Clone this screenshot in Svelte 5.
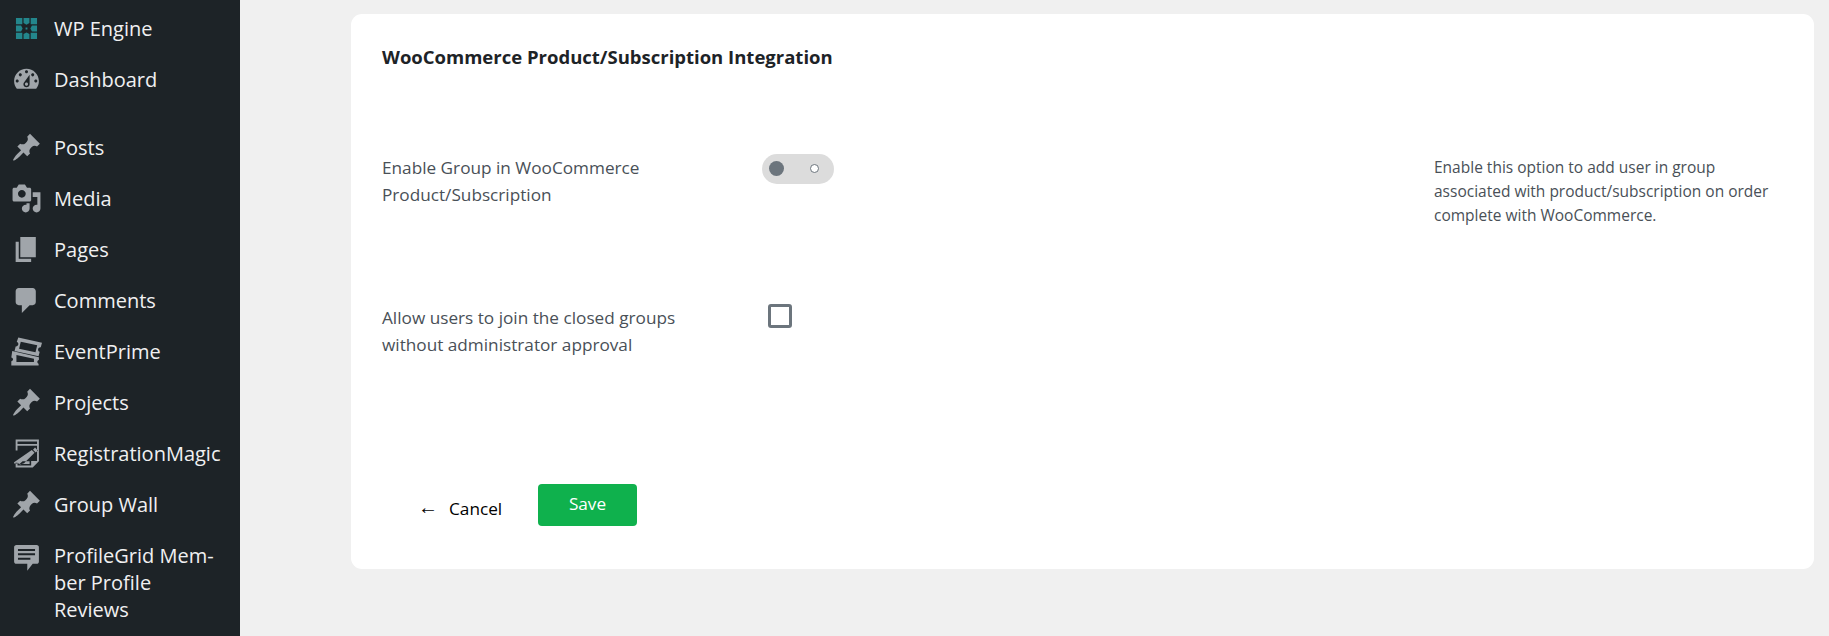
<script>
  const pin = "M10.44 3.02l1.82-1.82 6.36 6.35-1.83 1.82c-1.05-.68-2.48-.57-3.41.36l-.75.75c-.92.93-1.04 2.35-.35 3.41l-1.83 1.82-2.41-2.41-2.8 2.79c-.42.42-3.38 2.71-3.8 2.29s1.86-3.39 2.28-3.81l2.79-2.79L4.1 9.36l1.83-1.82c1.05.69 2.48.57 3.4-.36l.75-.75c.93-.92 1.05-2.35.36-3.41z";
  const items = [
    { t: "Dashboard", d: "M3.76 16h12.48c1.1-1.37 1.76-3.11 1.76-5 0-4.42-3.58-8-8-8s-8 3.58-8 8c0 1.89.66 3.63 1.76 5zM10 4c.55 0 1 .45 1 1s-.45 1-1 1-1-.45-1-1 .45-1 1-1zM6 6c.55 0 1 .45 1 1s-.45 1-1 1-1-.45-1-1 .45-1 1-1zm8 0c.55 0 1 .45 1 1s-.45 1-1 1-1-.45-1-1 .45-1 1-1zm-5.37 5.55L12 7v6c0 1.1-.9 2-2 2s-2-.9-2-2c0-.57.24-1.08.63-1.45zM4 10c.55 0 1 .45 1 1s-.45 1-1 1-1-.45-1-1 .45-1 1-1zm12 0c.55 0 1 .45 1 1s-.45 1-1 1-1-.45-1-1 .45-1 1-1zm-5 3c0-.55-.45-1-1-1s-1 .45-1 1 .45 1 1 1 1-.45 1-1z", gap: true },
    { t: "Posts", d: pin },
    { t: "Media", d: "M13 11V4c0-.55-.45-1-1-1h-1.67L9 1H5L3.67 3H2c-.55 0-1 .45-1 1v7c0 .55.45 1 1 1h10c.55 0 1-.45 1-1zM7 4.5c1.38 0 2.5 1.12 2.5 2.5S8.38 9.5 7 9.5 4.5 8.38 4.5 7 5.62 4.5 7 4.5zM14 6h5v10.5c0 1.38-1.12 2.5-2.5 2.5S14 17.88 14 16.5s1.12-2.5 2.5-2.5c.17 0 .34.02.5.05V9h-3V6zm-4 8.05V13h2v3.500c0 1.38-1.12 2.5-2.5 2.5S7 17.88 7 16.5 8.12 14 9.5 14c.17 0 .34.02.5.05z" },
    { t: "Pages", d: "M6 15V2h10v13H6zm-1 1h8v2H3V5h2v11z" },
    { t: "Comments", d: "M5 2h9c1.1 0 2 .9 2 2v7c0 1.1-.9 2-2 2h-2l-5 5v-5H5c-1.1 0-2-.9-2-2V4c0-1.1.9-2 2-2z" },
    { t: "EventPrime", d: "M4.7 1 20 4.3 19.2 7.3c-.9-.1-1.5.4-1.7 1.2-.2.8.2 1.4 1 1.7L17.8 13 2.3 9.7 3 6.7c.9.1 1.500-.4 1.7-1.200.2-.8-.2-1.500-1-1.700zM6.300 3.700 5.200 8.300 15.800 10.500 16.900 6zM.8 9.700 18 13.700V15.500c-.7.2-1 .7-1 1.200s.3 1 .8 1.200V19H.2v-2.700c.7-.2 1.100-.7 1.100-1.300 0-.5-.4-1-1.100-1.200zM3.500 12.300V16.800H14.800V14.700z" },
    { t: "Projects", d: pin },
    { t: "RegistrationMagic", d: "M3 1h15v14l-4 4H3v-3h1.200v1.800h8.800v-3h3.800V5H4.200v3H3zM4.200 2.200v1.600h12.600V2.200zM15.500 6.200l1.800 1.800-1.300 1.300-1.800-1.800zM13.400 7.700l1.800 1.800-6.800 6.800-2.600.8-.7-.7-3.100.100v-.8zM5.500 16.800h6.500v-1.800H7.500z" },
    { t: "Group Wall", d: pin },
    { t: "ProfileGrid Member Profile Reviews", d: "M3.500 2h13c1 0 1.500.6 1.500 1.500v9c0 .9-.6 1.500-1.500 1.500H14l-3.500 4.500V14h-7C2.600 14 2 13.400 2 12.500v-9C2 2.600 2.600 2 3.500 2zM4.500 4.500v1.300h11V4.500zM4.500 7.300v1.300h11V7.300zM4.500 10.100v1.300h8v-1.300z", multi: true },
  ];
</script>

<div class="page">
  <aside class="side">
    <div class="item first">
      <svg class="ico" viewBox="0 0 20 20" fill="#23868c">
        <path d="M3.200 3.200h4.100v4.100H3.200zM8.100 3.200h3.800v3.300L10 7.500 8.100 6.500zM12.700 3.200h4.100v4.100h-4.100zM3.200 8.100h3.300L7.500 10l-1 1.900H3.200zM13.500 8.100h3.300v3.800h-3.300l-1-1.900zM3.200 12.700h4.100v4.100H3.200zM10 12.500l1.900 1v3.300H8.100v-3.300zM12.700 12.700h4.100v4.100h-4.100zM9.400 9.400h1.200v1.200H9.400z" />
      </svg>
      <span>WP Engine</span>
    </div>
    {#each items as it}
      <div class="item" class:gap={it.gap} class:multi={it.multi}>
        <svg class="ico" viewBox="0 0 20 20" fill="#a0a5aa"><path fill-rule="evenodd" d={it.d} /></svg>
        <span>{#if it.multi}ProfileGrid Mem-<br />ber Profile<br />Reviews{:else}{it.t}{/if}</span>
      </div>
    {/each}
  </aside>

  <main class="main">
    <section class="card">
      <h2>WooCommerce Product/Subscription Integration</h2>

      <div class="row r1">
        <div class="label">Enable Group in WooCommerce<br />Product/Subscription</div>
        <div class="ctrl"><div class="toggle"><i class="knob"></i><i class="ring"></i></div></div>
        <div class="help">Enable this option to add user in group associated with product/subscription on order complete with WooCommerce.</div>
      </div>

      <div class="row r2">
        <div class="label">Allow users to join the closed groups<br />without administrator approval</div>
        <div class="ctrl"><div class="check"></div></div>
        <div class="help"></div>
      </div>

      <div class="actions">
        <a class="cancel" href="#cancel"><span class="arrow">←</span><span>Cancel</span></a>
        <button class="save">Save</button>
      </div>
    </section>
  </main>
</div>

<style>
  :global(body) {
    margin: 0;
    background: #f0f0f0;
    font-family: "Open Sans", "Noto Sans", "Liberation Sans", sans-serif;
  }
  .page {
    display: flex;
    width: 1829px;
    height: 636px;
    overflow: hidden;
  }
  .side {
    width: 240px;
    flex: none;
    background: #1d2327;
    color: #f0f0f1;
    font-size: 20px;
    line-height: 27px;
    padding-top: 3px;
    box-sizing: border-box;
  }
  .item {
    display: flex;
    align-items: center;
    height: 51px;
    padding-left: 11px;
  }
  .item.gap { margin-bottom: 17px; }
  .item.multi {
    height: auto;
    align-items: flex-start;
    padding-top: 12px;
  }
  .ico {
    width: 31px;
    height: 31px;
    margin-right: 12px;
    flex: none;
  }
  .main {
    flex: 1;
    padding: 14px 15px 0 111px;
    min-width: 0;
  }
  .card {
    background: #fff;
    border-radius: 11px;
    height: 555px;
    box-sizing: border-box;
    padding: 29px 31px 0;
  }
  h2 {
    margin: 0;
    font-size: 18.5px;
    line-height: 27px;
    font-weight: 700;
    color: #1d2327;
  }
  .row {
    display: grid;
    grid-template-columns: 380px 672px 1fr;
    font-size: 17.2px;
    line-height: 27px;
    color: #495057;
  }
  .r1 { margin-top: 83px; height: 151px; }
  .r1 .label { padding-top: 1px; }
  .r2 { height: 180px; }
  .ctrl { padding-top: 1px; }
  .toggle {
    width: 72px;
    height: 30px;
    border-radius: 15px;
    background: #dcdcdc;
    position: relative;
  }
  .knob {
    position: absolute;
    left: 7px;
    top: 7px;
    width: 15px;
    height: 15px;
    border-radius: 50%;
    background: #6c757d;
  }
  .ring {
    position: absolute;
    left: 48px;
    top: 10px;
    width: 9px;
    height: 9px;
    border-radius: 50%;
    background: #fff;
    border: 1.5px solid #6c757d;
    box-sizing: border-box;
  }
  .check {
    width: 24px;
    height: 24px;
    box-sizing: border-box;
    border: 3px solid #6c757d;
    border-radius: 3px;
    background: #fff;
    margin-left: 6px;
    margin-top: -1px;
  }
  .help {
    font-size: 15.5px;
    line-height: 24px;
    padding-top: 2px;
  }
  .actions {
    display: flex;
    align-items: flex-start;
    padding-left: 36px;
  }
  .cancel {
    display: flex;
    align-items: center;
    height: 48px;
    color: #000;
    text-decoration: none;
    font-size: 17.2px;
    width: 120px;
  }
  .arrow { width: 31px; font-size: 20px; line-height: 27px; margin-top: -3px; }
  .save {
    width: 99px;
    height: 42px;
    border: 0;
    border-radius: 4px;
    background: #0fb14d;
    color: #fff;
    font: inherit;
    font-size: 17.2px;
    padding: 0 0 4px;
  }
</style>
